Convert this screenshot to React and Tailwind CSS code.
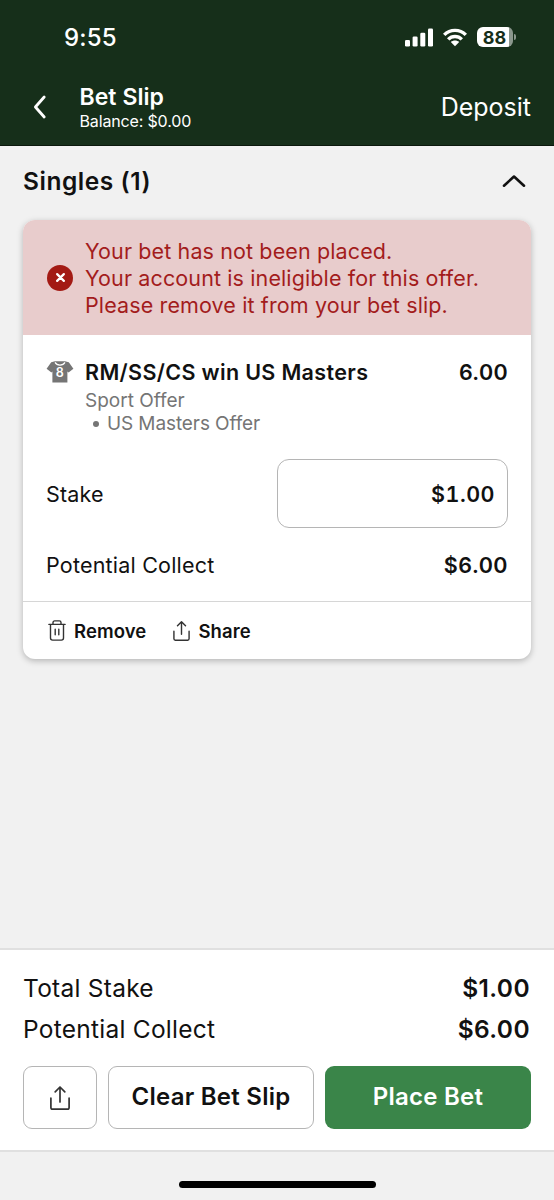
function SignalIcon() {
  return (
    <svg width="28" height="19" viewBox="0 0 28 19" fill="white">
      <rect x="0" y="12" width="5" height="6.5" rx="1.3" />
      <rect x="7.6" y="8.5" width="5" height="10" rx="1.3" />
      <rect x="15.3" y="4.7" width="5" height="13.8" rx="1.3" />
      <rect x="23" y="0.5" width="5" height="18" rx="1.3" />
    </svg>
  );
}

function WifiIcon() {
  return (
    <svg width="24" height="19" viewBox="0 0 24 19" fill="none" stroke="white" strokeWidth="3.4">
      <path d="M1.2 6.9C7.2 0.8 16.8 0.8 22.8 6.9" />
      <path d="M5.2 11.4C9 7.6 15 7.6 18.8 11.4" />
      <path d="M12 18.2L7.8 14C10.2 12 13.8 12 16.2 14Z" fill="white" stroke="none" />
    </svg>
  );
}

function ShirtIcon() {
  return (
    <svg width="28" height="22" viewBox="0 0 28 22" className="shrink-0">
      <path
        d="M9 0.2H19L22.8 1.2L27.4 7.8L22.6 11.6L21.4 10.6V21.6H6.4V10.6L5.4 11.6L0.6 7.8L5.2 1.2Z"
        fill="#757575"
      />
      <path d="M9 1.4C11 4.9 17 4.9 19 1.4" fill="none" stroke="white" strokeWidth="1.2" />
      <text
        x="14"
        y="16"
        textAnchor="middle"
        fill="white"
        className="font-['Inter',sans-serif] text-[12.5px] font-semibold"
      >
        8
      </text>
    </svg>
  );
}

function TrashIcon() {
  return (
    <svg width="18" height="21" viewBox="0 0 18 21" fill="none" stroke="#333" strokeWidth="1.4" strokeLinecap="round" strokeLinejoin="round">
      <path d="M0.9 4.4H17.1M5 4.2V2.6C5 1.6 5.7 0.9 6.7 0.9H11.3C12.3 0.9 13 1.6 13 2.6V4.2" />
      <path d="M2.5 4.6V18C2.5 19.3 3.3 20.1 4.6 20.1H13.4C14.7 20.1 15.5 19.3 15.5 18V4.6M7.2 9.3V14.8M10.8 9.3V14.8" />
    </svg>
  );
}

function ShareIcon({ className }) {
  return (
    <svg viewBox="0 0 20 24" fill="none" stroke="#333" strokeWidth="1.7" strokeLinecap="round" strokeLinejoin="round" className={className}>
      <path d="M10 16V1.2M5.2 5.8L10 1L14.8 5.8" />
      <path d="M0.9 12.2V21.4C0.9 22.4 1.6 23.1 2.6 23.1H17.4C18.4 23.1 19.1 22.4 19.1 21.4V12.2" />
    </svg>
  );
}

function Header() {
  return (
    <header className="flex h-[146px] flex-col border-b border-[#0b180d] bg-[#162f1a] text-white">
      <div className="flex h-[74px] items-center justify-between pr-[38px] pl-[64px]">
        <span className="pt-px text-[24px] font-[550] tracking-[0.2px]">9:55</span>
        <div className="flex items-center">
          <SignalIcon />
          <span className="w-[10px]" />
          <WifiIcon />
          <span className="w-[10px]" />
          <span className="flex h-[20px] w-[36px] items-center justify-center rounded-[6px] bg-linear-to-r from-white from-88% to-[#8b978d] to-88% pr-px text-[18px] font-bold text-[#162f1a]">
            88
          </span>
          <span className="ml-px h-[6px] w-[2px] rounded-r bg-[#8b978d]" />
        </div>
      </div>
      <div className="flex h-[66px] items-center pr-[23px] pl-[33px]">
        <svg width="14" height="24" viewBox="0 0 14 24" fill="none" stroke="white" strokeWidth="2.8" strokeLinecap="round" strokeLinejoin="round">
          <path d="M11.2 2L2.4 12L11.2 22" />
        </svg>
        <div className="ml-[32.5px] flex-1 pt-px">
          <h1 className="text-[23px] leading-[27px] font-semibold tracking-[0.05px]">Bet Slip</h1>
          <p className="text-[16px] leading-[20px] tracking-[-0.15px]">Balance: $0.00</p>
        </div>
        <span className="pt-[2px] text-[25px] font-normal">Deposit</span>
      </div>
    </header>
  );
}

function ErrorAlert() {
  return (
    <div className="flex h-[115px] items-center bg-[#e8cccc] pl-[24px] text-[#a31c1c]">
      <span className="flex size-[26px] shrink-0 items-center justify-center rounded-full bg-[#a31a14]">
        <svg width="9" height="9" viewBox="0 0 10 10" stroke="white" strokeWidth="2.5" strokeLinecap="round">
          <path d="M1.3 1.3L8.7 8.7M8.7 1.3L1.3 8.7" />
        </svg>
      </span>
      <p className="ml-[12px] pt-[2px] text-[21.5px] leading-[27px] font-normal tracking-[0.12px]">
        Your bet has not been placed.
        <br />
        Your account is ineligible for this offer.
        <br />
        Please remove it from your bet slip.
      </p>
    </div>
  );
}

function BetCard() {
  return (
    <article className="mx-[23px] overflow-hidden rounded-[12px] bg-white shadow-[0_2px_6px_rgba(0,0,0,0.25)]">
      <ErrorAlert />
      <div className="flex h-[266px] flex-col px-[23px] pt-[23px]">
        <div className="flex h-[28px] items-center text-[21.5px] font-semibold tracking-[0.35px]">
          <ShirtIcon />
          <h3 className="ml-[11px] flex-1">RM/SS/CS win US Masters</h3>
          <span>6.00</span>
        </div>
        <div className="pl-[39px] text-[19px] leading-[23px] font-normal text-[#757575]">
          <p className="mt-[3px]">Sport Offer</p>
          <p className="flex items-center tracking-[-0.1px]">
            <span className="mr-[8px] ml-[8px] size-[6px] rounded-full bg-[#757575]" />
            US Masters Offer
          </p>
        </div>
        <div className="mt-[24px] flex h-[69px] items-center justify-between">
          <span className="pt-px text-[21.5px] font-normal tracking-[0.2px]">Stake</span>
          <div className="flex h-[69px] w-[231px] items-center justify-end rounded-[12px] border border-[#b5b5b5] pt-px pr-[12px] text-[21.5px] font-semibold tracking-[0.5px] tabular-nums">
            $1.00
          </div>
        </div>
        <div className="mt-[23px] flex h-[28px] items-center justify-between text-[21.5px]">
          <span className="font-normal tracking-[0.2px]">Potential Collect</span>
          <span className="font-semibold tracking-[0.5px]">$6.00</span>
        </div>
      </div>
      <div className="flex h-[58px] items-center border-t border-[#d6d6d6] pl-[25px] text-[18.5px] font-semibold tracking-[0.1px]">
        <TrashIcon />
        <span className="ml-[8px] pt-[2px]">Remove</span>
        <ShareIcon className="ml-[27px] h-[20px] w-[17px]" />
        <span className="ml-[8px] pt-[2px]">Share</span>
      </div>
    </article>
  );
}

function Footer() {
  const totals = [
    { label: 'Total Stake', value: '$1.00' },
    { label: 'Potential Collect', value: '$6.00' },
  ];

  return (
    <footer className="h-[204px] border-y-2 border-[#e0e0e0] bg-white px-[23px] pt-[18px]">
      {totals.map(({ label, value }) => (
        <div key={label} className="flex h-[41px] items-center justify-between text-[24.5px]">
          <span className="font-normal tracking-[0.25px]">{label}</span>
          <span className="pr-px font-semibold tracking-[0.4px]">{value}</span>
        </div>
      ))}
      <div className="mt-[16px] flex h-[63px] text-[24px] font-semibold tracking-[0.25px]">
        <button className="flex w-[74px] items-center justify-center rounded-[9px] border border-[#b5b5b5]">
          <ShareIcon className="h-[24px] w-[20px]" />
        </button>
        <button className="ml-[11px] w-[206px] rounded-[9px] border border-[#b5b5b5] pb-[2px]">Clear Bet Slip</button>
        <button className="ml-[11px] flex-1 rounded-[9px] bg-[#3a8549] pb-[2px] text-white">Place Bet</button>
      </div>
    </footer>
  );
}

export default function App() {
  return (
    <div className="flex h-[1200px] w-[554px] flex-col overflow-hidden bg-[#f1f1f1] font-['Inter',sans-serif] text-[#111]">
      <Header />
      <main className="flex-1">
        <div className="flex h-[74px] items-center justify-between pr-[28px] pb-[3px] pl-[23px]">
          <h2 className="text-[24.5px] font-semibold tracking-[0.55px]">Singles (1)</h2>
          <svg width="24" height="13" viewBox="0 0 24 13" fill="none" stroke="#111" strokeWidth="2.6" strokeLinecap="round" strokeLinejoin="round">
            <path d="M2 10.7L12 1.5L22 10.7" />
          </svg>
        </div>
        <BetCard />
      </main>
      <Footer />
      <div className="flex h-[48px] shrink-0 justify-center pt-[29px]">
        <div className="h-[7px] w-[197px] rounded-full bg-black" />
      </div>
    </div>
  );
}
